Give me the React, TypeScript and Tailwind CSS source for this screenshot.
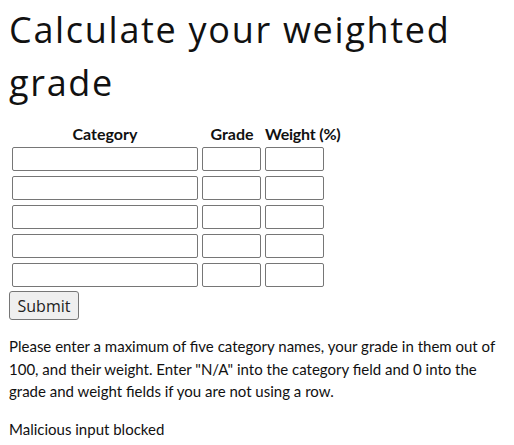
import React from "react";

const heading = { fontFamily: '"Open Sans", sans-serif' };

export default function App() {
  const rows = [0, 1, 2, 3, 4];
  return (
    <div className="px-2 pt-[3px] text-[#111]" style={{ fontFamily: 'Lato, sans-serif' }}>
      <h1 className="text-[36px] leading-[53px] font-normal tracking-[1.7px] pl-[1px]" style={heading}>
        Calculate your weighted grade
      </h1>
      <div className="ml-[4px] mt-[15px] w-max">
        <div className="grid grid-cols-[186px_59px_77px] gap-x-[4px] mb-[4px]">
          <div className="text-[16px] font-bold leading-[19px] text-center">Category</div>
          <div className="text-[16px] font-bold leading-[19px] text-center pl-[1px]">Grade</div>
          <div className="text-[16px] font-bold leading-[19px] whitespace-nowrap tracking-[-0.2px]">Weight (%)</div>
        </div>
        <div className="grid grid-cols-[186px_59px_77px] gap-x-[4px] gap-y-[5px]">
          {rows.map((r) => (
            <React.Fragment key={r}>
              <div className="h-[24px] w-[186px] border border-[#767676] rounded-[2px] bg-white" />
              <div className="h-[24px] w-[59px] border border-[#767676] rounded-[2px] bg-white" />
              <div className="h-[24px] w-[59px] border border-[#767676] rounded-[2px] bg-white" />
            </React.Fragment>
          ))}
        </div>
      </div>
      <div className="mt-[4px] ml-[1px]">
        <div className="inline-flex items-center justify-center h-[29px] w-[70px] bg-[#efefef] border border-[#767676] rounded-[3px] text-[16px] text-[#222]" style={heading}>
          Submit
        </div>
      </div>
      <p className="mt-[15px] text-[15px] leading-[22.5px] pl-[1px]">
        Please enter a maximum of five category names, your grade in them out of 100, and their weight. Enter "N/A" into the category field and 0 into the grade and weight fields if you are not using a row.
      </p>
      <p className="mt-[15px] text-[15px] leading-[22.5px] pl-[1px]">Malicious input blocked</p>
    </div>
  );
}
